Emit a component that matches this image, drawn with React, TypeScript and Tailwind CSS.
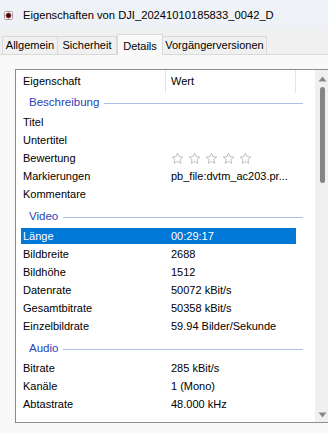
import { Fragment } from "react";

type Row = { label: string; value?: string; stars?: boolean; selected?: boolean };
type Group = { title: string; first?: boolean; rows: Row[] };

const GROUPS: Group[] = [
  {
    title: "Beschreibung",
    first: true,
    rows: [
      { label: "Titel" },
      { label: "Untertitel" },
      { label: "Bewertung", stars: true },
      { label: "Markierungen", value: "pb_file:dvtm_ac203.pr..." },
      { label: "Kommentare" },
    ],
  },
  {
    title: "Video",
    rows: [
      { label: "Länge", value: "00:29:17", selected: true },
      { label: "Bildbreite", value: "2688" },
      { label: "Bildhöhe", value: "1512" },
      { label: "Datenrate", value: "50072 kBit/s" },
      { label: "Gesamtbitrate", value: "50358 kBit/s" },
      { label: "Einzelbildrate", value: "59.94 Bilder/Sekunde" },
    ],
  },
  {
    title: "Audio",
    rows: [
      { label: "Bitrate", value: "285 kBit/s" },
      { label: "Kanäle", value: "1 (Mono)" },
      { label: "Abtastrate", value: "48.000 kHz" },
    ],
  },
  { title: "Medien", rows: [] },
];

const TABS = [
  { name: "Allgemein", w: "w-[56px]" },
  { name: "Sicherheit", w: "w-[59px]" },
  { name: "Details", w: "w-[46px]", active: true },
  { name: "Vorgängerversionen", w: "w-[104px]" },
];

function FileIcon() {
  return (
    <svg width="9" height="9" viewBox="0 0 9 9" className="flex-none">
      <rect x="0.5" y="0.5" width="8" height="8" rx="1" fill="#fff" stroke="#a0a0a0" />
      <circle cx="4.5" cy="4.5" r="2.5" fill="#1e1414" stroke="#b8283c" strokeWidth="1" />
    </svg>
  );
}

function Star() {
  return (
    <svg width="13" height="13" viewBox="0 0 24 24">
      <path
        d="M12 2.2l2.9 6.4 6.9.7-5.2 4.7 1.5 6.9L12 17.4l-6.1 3.5 1.5-6.9-5.2-4.7 6.9-.7z"
        fill="#fff"
        stroke="#b9b9b9"
        strokeWidth="1.7"
        strokeLinejoin="round"
      />
    </svg>
  );
}

function PropertyRow({ row }: { row: Row }) {
  return (
    <div className="ml-[5px] mr-[19px] h-[18px] py-[1px]">
      <div
        className={`flex h-[16px] items-center ${row.selected ? "bg-[#0078d7] text-white" : "text-black"}`}
      >
        <div className="w-[150px] pl-[2px] whitespace-nowrap">{row.label}</div>
        <div className="flex-1 whitespace-nowrap">
          {row.stars ? (
            <div className="flex gap-[4px]">
              <Star />
              <Star />
              <Star />
              <Star />
              <Star />
            </div>
          ) : (
            row.value
          )}
        </div>
      </div>
    </div>
  );
}

export default function App() {
  return (
    <div className="flex h-[433px] w-[328px] flex-col overflow-hidden bg-[#f0f0f0] font-['Liberation_Sans',Arial,sans-serif] text-[11px] text-black">
      <div className="flex h-[30px] flex-none items-center gap-[10px] bg-[#eef2f7] pl-[4px] text-[11.2px]">
        <FileIcon />
        <span className="whitespace-nowrap">Eigenschaften von DJI_20241010185833_0042_D</span>
      </div>

      <div className="flex h-[24px] flex-none items-end pl-[2px]">
        {TABS.map((tab) =>
          tab.active ? (
            <div
              key={tab.name}
              className={`${tab.w} relative z-10 -mb-px flex h-[21px] flex-none items-start justify-center border border-b-0 border-[#d9d9d9] bg-[#f9f9f9] pt-[3px]`}
            >
              {tab.name}
            </div>
          ) : (
            <div
              key={tab.name}
              className={`${tab.w} flex h-[18px] flex-none items-center justify-center border border-b-0 border-l-0 first:border-l border-[#d9d9d9] bg-[#f0f0f0]`}
            >
              {tab.name}
            </div>
          ),
        )}
      </div>

      <div className="flex-1 border-t border-[#d9d9d9] bg-[#f9f9f9] pl-[15px] pt-[14px]">
        <div className="flex h-[354px] w-[330px] border border-[#8c8c8c] bg-white">
          <div className="h-full w-[299px] overflow-hidden">
            <div className="flex h-[23px] items-center">
              <div className="w-[149px] pl-[7px]">Eigenschaft</div>
              <div className="h-full w-px bg-[#e5e5e5]" />
              <div className="w-[129px] pl-[5px]">Wert</div>
              <div className="h-full w-px bg-[#e5e5e5]" />
            </div>
            {GROUPS.map((g) => (
              <Fragment key={g.title}>
                <div
                  className={`flex items-center pl-[13px] pr-[12px] ${g.first ? "h-[20px]" : "h-[24px] pt-[4px]"}`}
                >
                  <span className="text-[11.5px] text-[#2b3fb7]">{g.title}</span>
                  <div className="ml-[5px] h-px flex-1 bg-[#adbde3]" />
                </div>
                {g.rows.map((r) => (
                  <PropertyRow key={r.label} row={r} />
                ))}
              </Fragment>
            ))}
          </div>
          <div className="flex h-full w-[17px] flex-col items-center bg-[#f0f0f0] pr-[2px]">
            <svg width="9" height="6" viewBox="0 0 9 6" className="mt-[6px] flex-none">
              <path d="M4.5 0.5L8.5 5.5H0.5z" fill="#8a8a8a" />
            </svg>
            <div className="mt-[5px] h-[96px] w-[5px] flex-none rounded-full bg-[#858585]" />
            <div className="flex-1" />
            <svg width="9" height="6" viewBox="0 0 9 6" className="mb-[4px] flex-none">
              <path d="M0.5 0.5H8.5L4.5 5.5z" fill="#8a8a8a" />
            </svg>
          </div>
        </div>
      </div>
    </div>
  );
}
